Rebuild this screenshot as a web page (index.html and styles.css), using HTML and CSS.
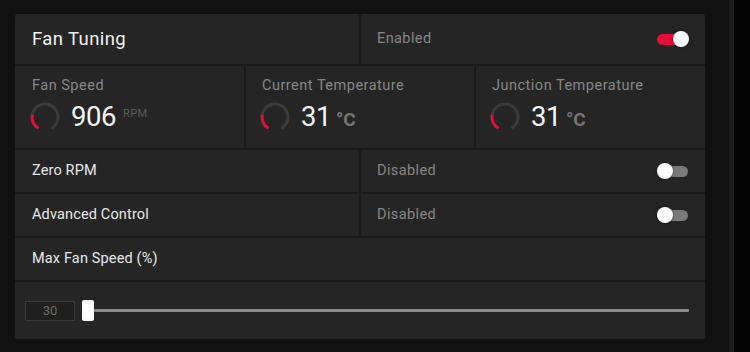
FILE: index.html
```html
<!DOCTYPE html>
<html>
<head>
<meta charset="utf-8">
<link rel="stylesheet" href="styles.css">
</head>
<body>
<div class="page">
  <main class="main">
    <section class="panel">
      <div class="row row-2">
        <div class="cell title">Fan Tuning</div>
        <div class="cell between">
          <span class="state">Enabled</span>
          <span class="toggle on"><span class="track"></span><span class="knob"></span></span>
        </div>
      </div>
      <div class="row row-3">
        <div class="cell metric">
          <div class="mlabel">Fan Speed</div>
          <div class="mvalue">
            <svg class="gauge" viewBox="0 0 32 32" width="32" height="32"><path d="M9.5 27.26 A13 13 0 1 1 22.5 27.26" fill="none" stroke="#3b3b3b" stroke-width="3"/><path d="M9.5 27.26 A13 13 0 0 1 3.2 13.74" fill="none" stroke="#e0103a" stroke-width="3"/></svg>
            <span class="num">906</span><span class="unit small">RPM</span>
          </div>
        </div>
        <div class="cell metric">
          <div class="mlabel">Current Temperature</div>
          <div class="mvalue">
            <svg class="gauge" viewBox="0 0 32 32" width="32" height="32"><path d="M9.5 27.26 A13 13 0 1 1 22.5 27.26" fill="none" stroke="#3b3b3b" stroke-width="3"/><path d="M9.5 27.26 A13 13 0 0 1 3.2 13.74" fill="none" stroke="#e0103a" stroke-width="3"/></svg>
            <span class="num">31</span><span class="unit deg">°C</span>
          </div>
        </div>
        <div class="cell metric">
          <div class="mlabel">Junction Temperature</div>
          <div class="mvalue">
            <svg class="gauge" viewBox="0 0 32 32" width="32" height="32"><path d="M9.5 27.26 A13 13 0 1 1 22.5 27.26" fill="none" stroke="#3b3b3b" stroke-width="3"/><path d="M9.5 27.26 A13 13 0 0 1 3.2 13.74" fill="none" stroke="#e0103a" stroke-width="3"/></svg>
            <span class="num">31</span><span class="unit deg">°C</span>
          </div>
        </div>
      </div>
      <div class="row row-2 short">
        <div class="cell label">Zero RPM</div>
        <div class="cell between">
          <span class="state">Disabled</span>
          <span class="toggle"><span class="track"></span><span class="knob"></span></span>
        </div>
      </div>
      <div class="row row-2 short">
        <div class="cell label">Advanced Control</div>
        <div class="cell between">
          <span class="state">Disabled</span>
          <span class="toggle"><span class="track"></span><span class="knob"></span></span>
        </div>
      </div>
      <div class="row short">
        <div class="cell label">Max Fan Speed (%)</div>
      </div>
      <div class="row slider-row">
        <div class="cell slider">
          <div class="numbox">30</div>
          <div class="thumb"></div>
          <div class="rail"></div>
        </div>
      </div>
    </section>
  </main>
  <div class="gutter"></div>
  <div class="edge"></div>
</div>
</body>
</html>
```
FILE: styles.css
```css
* { box-sizing: border-box; }
html, body {
  margin: 0;
  height: 100%;
  background: #000;
  font-family: Roboto, "Noto Sans", sans-serif;
}
.page {
  display: flex;
  width: 750px;
  height: 352px;
}
.main {
  width: 729px;
  background: #111111;
  padding: 14px 24px 0 15px;
}
.gutter {
  width: 5px;
  background: #1d1d1d;
}
.edge {
  flex: 1;
  background: #030303;
}
.panel {
  width: 690px;
  height: 325px;
  background: #1a1a1a;
  border-radius: 3px;
  overflow: hidden;
  display: flex;
  flex-direction: column;
  gap: 2px;
}
.row {
  display: grid;
  grid-template-columns: 1fr;
  gap: 2px;
  height: 50px;
}
.row-2 { grid-template-columns: 1fr 1fr; }
.row-3 { grid-template-columns: 229px 228px 229px; height: 82px; }
.row.short { height: 42px; }
.row.slider-row { height: 57px; }
.cell {
  background: #252525;
  display: flex;
  align-items: center;
  padding: 0 16px 0 17px;
}
.between { justify-content: space-between; padding-left: 16px; }
.title {
  color: #f2f2f2;
  font-size: 18.5px;
  letter-spacing: 0.4px;
  padding-bottom: 1px;
}
.label {
  color: #eaeaea;
  font-size: 14.5px;
  letter-spacing: 0.15px;
  padding-bottom: 2px;
}
.state {
  color: #878787;
  font-size: 14.5px;
  letter-spacing: 0.4px;
  padding-bottom: 2px;
}
.toggle {
  position: relative;
  width: 32px;
  height: 16px;
}
.toggle .track {
  position: absolute;
  left: 0;
  top: 3px;
  width: 31px;
  height: 11px;
  border-radius: 6px;
  background: #7a7a7a;
}
.toggle.on .track { background: #e0103a; width: 29px; }
.toggle .knob {
  position: absolute;
  top: 0;
  left: 0;
  width: 16px;
  height: 16px;
  border-radius: 50%;
  background: #ffffff;
  box-shadow: 0 0 3px rgba(0,0,0,0.5);
}
.toggle.on .knob { left: 16px; }
.metric {
  flex-direction: column;
  align-items: flex-start;
  justify-content: flex-start;
  padding-top: 10px;
  padding-left: 16px;
}
.metric:first-child { padding-left: 17px; }
.mlabel {
  color: #878787;
  font-size: 14.5px;
  letter-spacing: 0.5px;
  height: 20px;
  line-height: 20px;
}
.mvalue {
  display: flex;
  align-items: center;
  margin-top: 4px;
  margin-left: -3px;
  height: 34px;
}
.gauge { display: block; margin-right: 10px; }
.num {
  color: #f5f5f5;
  font-size: 27.5px;
  line-height: 30px;
  letter-spacing: -0.5px;
}
.unit { color: #6a6a6a; }
.unit.small {
  font-size: 11px;
  margin-left: 7px;
  margin-top: -8px;
  letter-spacing: 0.5px;
  color: #5a5a5a;
}
.unit.deg {
  font-size: 19px;
  font-weight: 700;
  margin-left: 5px;
  margin-top: 5px;
  color: #747474;
}
.slider {
  padding: 0 16px 0 10px;
}
.numbox {
  width: 50px;
  height: 20px;
  border: 1px solid #3a3a3a;
  background: #1f1f1f;
  color: #6e6e6e;
  font-size: 13px;
  display: flex;
  align-items: center;
  justify-content: center;
}
.thumb {
  width: 12px;
  height: 21px;
  background: #ffffff;
  border-radius: 2px;
  margin-left: 7px;
}
.rail {
  flex: 1;
  height: 3px;
  background: #8a8a8a;
  border-radius: 1px;
}
```
